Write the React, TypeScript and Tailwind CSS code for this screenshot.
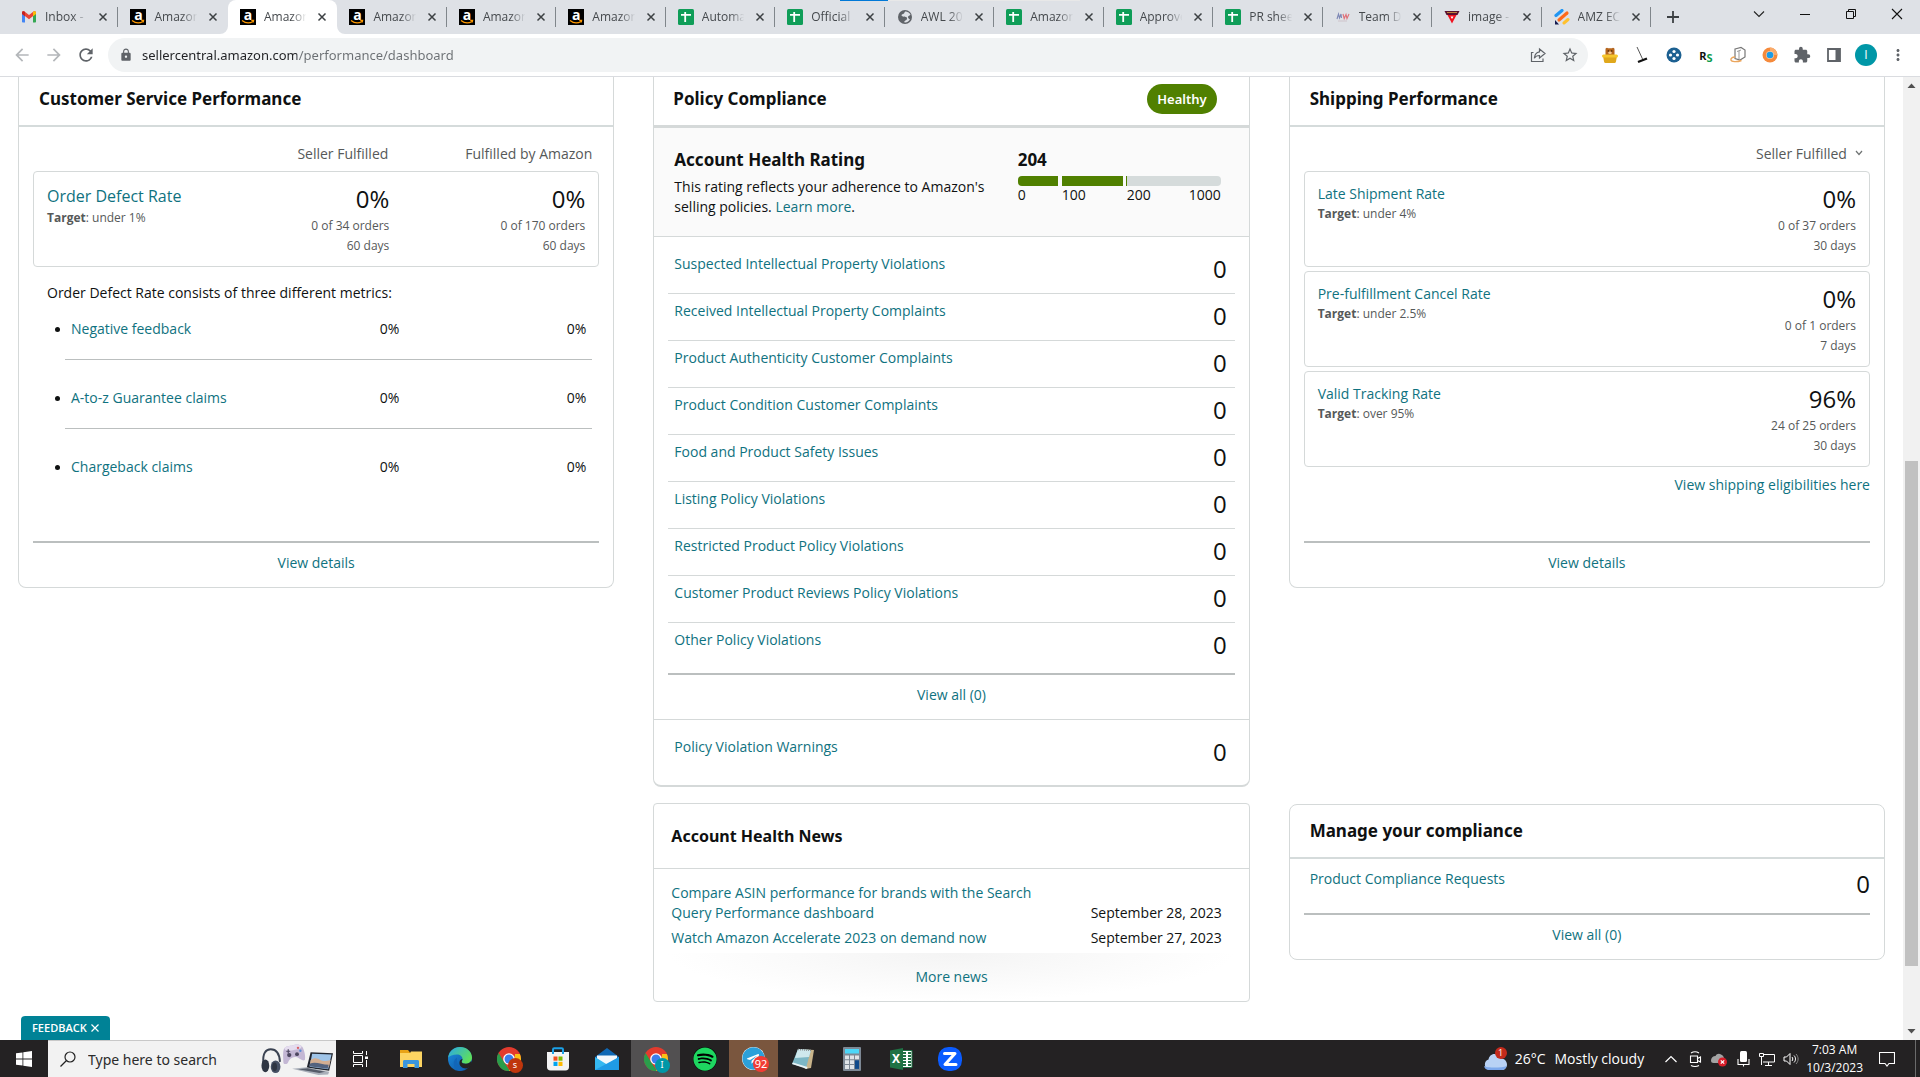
import type { ReactNode } from "react";
import { clsx } from "clsx";
import { FaSpotify, FaTelegram } from "react-icons/fa";
import {
  MdArrowBack,
  MdArrowForward,
  MdExtension,
  MdLock,
  MdMoreVert,
  MdRefresh,
  MdStarBorder,
} from "react-icons/md";

type TabIcon = "gmail" | "amazon" | "sheets" | "globe" | "team" | "image" | "amz";

const tabs: { title: string; icon: TabIcon; active?: boolean; sep?: boolean }[] = [
  { title: "Inbox - a", icon: "gmail", sep: true },
  { title: "Amazon", icon: "amazon" },
  { title: "Amazon", icon: "amazon", active: true },
  { title: "Amazon", icon: "amazon", sep: true },
  { title: "Amazon", icon: "amazon", sep: true },
  { title: "Amazon", icon: "amazon", sep: true },
  { title: "Automa", icon: "sheets", sep: true },
  { title: "Official S", icon: "sheets", sep: true },
  { title: "AWL 20", icon: "globe", sep: true },
  { title: "Amazon", icon: "sheets", sep: true },
  { title: "Approve", icon: "sheets", sep: true },
  { title: "PR shee", icon: "sheets", sep: true },
  { title: "Team D", icon: "team", sep: true },
  { title: "image -", icon: "image", sep: true },
  { title: "AMZ EC", icon: "amz", sep: true },
];

const defectMetrics = ["Negative feedback", "A-to-z Guarantee claims", "Chargeback claims"];

const shippingMetrics = [
  { title: "Late Shipment Rate", target: "under 4%", value: "0%", orders: "0 of 37 orders", days: "30 days" },
  { title: "Pre-fulfillment Cancel Rate", target: "under 2.5%", value: "0%", orders: "0 of 1 orders", days: "7 days" },
  { title: "Valid Tracking Rate", target: "over 95%", value: "96%", orders: "24 of 25 orders", days: "30 days" },
];

const policies = [
  "Suspected Intellectual Property Violations",
  "Received Intellectual Property Complaints",
  "Product Authenticity Customer Complaints",
  "Product Condition Customer Complaints",
  "Food and Product Safety Issues",
  "Listing Policy Violations",
  "Restricted Product Policy Violations",
  "Customer Product Reviews Policy Violations",
  "Other Policy Violations",
];

const news = [
  { title: "Compare ASIN performance for brands with the Search Query Performance dashboard", date: "September 28, 2023" },
  { title: "Watch Amazon Accelerate 2023 on demand now", date: "September 27, 2023" },
];

/* ---------- browser icons ---------- */

function Favicon({ icon }: { icon: TabIcon }) {
  switch (icon) {
    case "gmail":
      return (
        <svg viewBox="0 0 16 16" className="size-4 shrink-0">
          <path d="M1 3.5v9.2c0 .5.3.8.8.8H4V7z" fill="#4285f4" />
          <path d="M15 3.5v9.2c0 .5-.3.8-.8.8H12V7z" fill="#34a853" />
          <path d="M1 3.6C1 2.2 2.6 1.8 3.5 2.5L8 6l4.5-3.5c.9-.7 2.5-.3 2.5 1.1v1.2L8 10.2 1 4.8z" fill="#ea4335" />
          <path d="M12 3l.5-.5c1-.7 2.5-.3 2.5 1.1V5l-3 2.3z" fill="#fbbc04" />
          <path d="M1 3.6C1 2.5 2.2 2 3.2 2.4L4 3v4.2L1 5z" fill="#c5221f" />
        </svg>
      );
    case "amazon":
      return (
        <span className="relative flex size-4 shrink-0 justify-center bg-black">
          <span className="font-['Open_Sans',sans-serif] text-[14px] leading-[11px] font-bold text-white">a</span>
          <svg viewBox="0 0 16 16" className="absolute inset-0 size-4">
            <path d="M2 11.500c3.500 2.800 8 2.800 11 .9M11.300 11.300h2.300l-.4 2.100" fill="none" stroke="#f90" strokeWidth="1.200" />
          </svg>
        </span>
      );
    case "sheets":
      return (
        <svg viewBox="0 0 16 16" className="size-4 shrink-0">
          <rect width="16" height="16" rx="1.500" fill="#0f9d58" />
          <path d="M3 5.800h10M7.200 3v10" stroke="#fff" strokeWidth="1.800" />
        </svg>
      );
    case "globe":
      return (
        <svg viewBox="0 0 16 16" className="size-4 shrink-0">
          <circle cx="8" cy="8" r="7" fill="#5f6368" />
          <path d="M9 2.500c-2 0-1 2-3 2.500s-2 2 0 2.500 4 0 4 2-2 1.500-3 3.800c2.500.5 5-.5 6-3-1-.3-2-1-2-2.300s2-1 2.500-2.500C12.500 4 11 2.800 9 2.500z" fill="#dee1e6" />
        </svg>
      );
    case "team":
      return (
        <svg viewBox="0 0 16 16" className="size-4 shrink-0">
          <path d="M2 10l1.500-5 1 4 1.500-4 .5 4" fill="none" stroke="#7d87b5" strokeWidth="1.100" />
          <path d="M8 5l1.200 4.500L11 5.500l1 4L14 5" fill="none" stroke="#e07078" strokeWidth="1.100" />
          <path d="M3 12h9" stroke="#c9b7bd" strokeWidth=".7" />
        </svg>
      );
    case "image":
      return (
        <svg viewBox="0 0 16 16" className="size-4 shrink-0">
          <path d="M.5 2h15l-2 4h-11z" fill="#5b1230" />
          <path d="M3 3.500h10" stroke="#d9a441" strokeWidth=".8" />
          <path d="M3.500 6h9L8 14.500z" fill="#f0121f" />
          <path d="M6.500 7.500h3L8 10z" fill="#fff" />
        </svg>
      );
    case "amz":
      return (
        <svg viewBox="0 0 16 16" className="size-4 shrink-0">
          <path d="M2 6.500L8 1.500" stroke="#2196f3" strokeWidth="3.200" strokeLinecap="round" />
          <path d="M5 11l8-7" stroke="#ff6a1a" strokeWidth="3.200" strokeLinecap="round" />
          <path d="M10 14l4-3.500" stroke="#ffc12e" strokeWidth="3" strokeLinecap="round" />
          <path d="M1 11l4 4.500H1z" fill="#151a4f" />
        </svg>
      );
  }
}

function CloseIcon() {
  return (
    <svg viewBox="0 0 16 16" className="size-4">
      <path d="M4.500 4.500l7 7M11.500 4.500l-7 7" stroke="#3c4043" strokeWidth="1.500" />
    </svg>
  );
}

function Tab({ title, icon, active, sep }: (typeof tabs)[number]) {
  return (
    <div
      className={clsx(
        "relative flex h-full min-w-0 flex-1 basis-0 items-center pl-3",
        active && "rounded-t-lg bg-white"
      )}
    >
      {active && (
        <>
          <svg viewBox="0 0 8 8" className="absolute bottom-0 -left-2 size-2">
            <path d="M8 0v8H0a8 8 0 0 0 8-8z" fill="#fff" />
          </svg>
          <svg viewBox="0 0 8 8" className="absolute -right-2 bottom-0 size-2">
            <path d="M0 0v8h8a8 8 0 0 1-8-8z" fill="#fff" />
          </svg>
        </>
      )}
      <Favicon icon={icon} />
      <span className="ml-2 min-w-0 flex-1 overflow-hidden font-['Open_Sans',sans-serif] text-xs whitespace-nowrap text-[#45494d] [mask-image:linear-gradient(to_right,black_55%,transparent_85%)]">
        {title}
      </span>
      <button type="button" aria-label="Close tab" className="mr-[7px]">
        <CloseIcon />
      </button>
      {sep && <span className="absolute top-[7px] right-0 h-5 w-px bg-[#80868b]" />}
    </div>
  );
}

function TabStrip() {
  return (
    <div className="relative flex h-[34px] shrink-0 bg-[#dee1e6]">
      {/* page sharing indicator */}
      <div className="absolute top-0 left-[840px] flex h-px">
        <span className="w-12 bg-[#0078d7]" />
        <span className="w-48 bg-[#e8e8e8]" />
      </div>
      <div className="flex min-w-0 flex-1 pl-[9px]">
        {tabs.map((tab, i) => (
          <Tab key={i} {...tab} />
        ))}
      </div>
      <div className="flex w-[269px] shrink-0 items-center">
        <button type="button" aria-label="New tab" className="ml-[14px]">
          <svg viewBox="0 0 16 16" className="size-4">
            <path d="M8 2v12M2 8h12" stroke="#3c4043" strokeWidth="1.800" />
          </svg>
        </button>
        <div className="mb-[6px] ml-auto flex items-center gap-[30px] pr-[15px]">
          <button type="button" aria-label="Search tabs">
            <svg viewBox="0 0 16 16" className="size-4">
              <path d="M3 5.500l5 5 5-5" fill="none" stroke="#222" strokeWidth="1.100" />
            </svg>
          </button>
          <button type="button" aria-label="Minimize">
            <svg viewBox="0 0 16 16" className="size-4">
              <path d="M3 8.500h10" stroke="#111" />
            </svg>
          </button>
          <button type="button" aria-label="Restore">
            <svg viewBox="0 0 16 16" className="size-4">
              <path d="M3.500 5.500h7v7h-7zM5.500 5.500v-2h7v7h-2" fill="none" stroke="#111" />
            </svg>
          </button>
          <button type="button" aria-label="Close window">
            <svg viewBox="0 0 16 16" className="size-4">
              <path d="M3 3l10 10M13 3L3 13" stroke="#111" strokeWidth="1.100" />
            </svg>
          </button>
        </div>
      </div>
    </div>
  );
}

const extensions: { label: string; icon: ReactNode }[] = [
  {
    label: "Honeypot extension",
    icon: (
      <svg viewBox="0 0 18 18" className="size-[18px]">
        <path d="M4.500 3.500a1.500 1.500 0 0 1 2.500-1.300h4a1.500 1.500 0 0 1 2.500 1.300V9h-9z" fill="#b5651d" />
        <circle cx="7.300" cy="5" r=".8" fill="#3b1d06" />
        <circle cx="10.700" cy="5" r=".8" fill="#3b1d06" />
        <ellipse cx="9" cy="6.800" rx="1.800" ry="1.200" fill="#f3c892" />
        <path d="M2 10h14l-1 5.500c-.2 1-1 1.500-2 1.500H5c-1 0-1.800-.5-2-1.500z" fill="#e0a81c" />
        <rect x="1" y="8.500" width="16" height="3" rx="1.500" fill="#f6c62d" />
      </svg>
    ),
  },
  {
    label: "Broom extension",
    icon: (
      <svg viewBox="0 0 18 18" className="size-[18px]">
        <path d="M4 1l6 13" stroke="#555" strokeWidth="1" />
        <path d="M5 16l9-3.500" stroke="#111" strokeWidth="2.400" />
      </svg>
    ),
  },
  {
    label: "Helium extension",
    icon: (
      <svg viewBox="0 0 18 18" className="size-[18px]">
        <circle cx="9" cy="9" r="7.500" fill="#1c6091" />
        <g fill="#fff">
          <circle cx="9" cy="5.500" r="1.600" />
          <circle cx="9" cy="12.500" r="1.600" />
          <circle cx="5.500" cy="9" r="1.600" />
          <circle cx="12.500" cy="9" r="1.600" />
        </g>
      </svg>
    ),
  },
  {
    label: "RevSeller",
    icon: (
      <span className="flex size-[18px] items-center justify-center text-[11px] leading-none font-bold">
        <span className="text-[#111]">R</span>
        <span className="pt-1 text-[#0c9a4b]">S</span>
      </span>
    ),
  },
  {
    label: "Box extension",
    icon: (
      <svg viewBox="0 0 18 18" className="size-[18px]">
        <path d="M6 3l6-1.500L16 4v7l-5 3-5-1.500z" fill="#fff" stroke="#777" strokeWidth="1.200" />
        <path d="M10 5v8M8 5.500L12 4" stroke="#999" />
        <path d="M6 11c-3 0-4.500 1.800-4 3.200s5 2.300 10.500.3" fill="none" stroke="#eba55c" strokeWidth="1.400" />
      </svg>
    ),
  },
  {
    label: "Seller toolkit",
    icon: (
      <svg viewBox="0 0 18 18" className="size-[18px]">
        <circle cx="9" cy="9" r="7.500" fill="#f58a3c" />
        <path d="M9 1.500A7.500 7.500 0 0 1 16.500 9H9z" fill="#f9ab6b" />
        <circle cx="9" cy="9" r="4" fill="#f9c9a0" />
        <circle cx="9" cy="9" r="3.300" fill="#1c9be6" />
      </svg>
    ),
  },
  { label: "Extensions", icon: <MdExtension className="size-[18px] text-[#5f6368]" /> },
  {
    label: "Side panel",
    icon: (
      <svg viewBox="0 0 18 18" className="size-[18px]">
        <path d="M3 3h12v12H3z" fill="none" stroke="#5f6368" strokeWidth="1.800" />
        <path d="M10.500 3H15v12h-4.500z" fill="#5f6368" />
      </svg>
    ),
  },
];

function Toolbar() {
  return (
    <div className="flex h-[43px] shrink-0 items-center border-b border-[#dadce0] bg-white pr-[13px] pl-3">
      <div className="flex w-24 items-center gap-3">
        <button type="button" aria-label="Back">
          <MdArrowBack className="size-5 text-[#b4b7ba]" />
        </button>
        <button type="button" aria-label="Forward">
          <MdArrowForward className="size-5 text-[#b4b7ba]" />
        </button>
        <button type="button" aria-label="Reload">
          <MdRefresh className="size-5 text-[#5f6368]" />
        </button>
      </div>
      <div className="flex h-[34px] flex-1 items-center rounded-full bg-[#f1f3f4] pr-[9px] pl-[11px]">
        <MdLock className="size-[14px] text-[#5f6368]" />
        {/* the host part of the address is darker than the path */}
        <input
          aria-label="Address"
          readOnly
          value="sellercentral.amazon.com/performance/dashboard"
          className="ml-[9px] flex-1 bg-linear-to-r from-[#202124] from-[155px] to-[#6b6f73] to-[155px] bg-clip-text pt-px text-[13px] text-transparent outline-none"
        />
        <div className="flex items-center gap-[14px]">
          <button type="button" aria-label="Share this page">
            <svg viewBox="0 0 18 18" className="size-[18px]">
              <path
                d="M4.500 6.500H2.500v9h11.500v-3M10.500 3l5.500 4.500-5.500 4.500V9.500c-2.500 0-4 .8-5.200 2.700.3-3.200 2-5.900 5.200-6.400z"
                fill="none"
                stroke="#5f6368"
                strokeWidth="1.200"
              />
            </svg>
          </button>
          <button type="button" aria-label="Bookmark this tab">
            <MdStarBorder className="size-[18px] text-[#5f6368]" />
          </button>
        </div>
      </div>
      <div className="ml-[13px] flex items-center gap-[14px]">
        {extensions.map((ext) => (
          <button key={ext.label} type="button" aria-label={ext.label}>
            {ext.icon}
          </button>
        ))}
      </div>
      <button
        type="button"
        className="ml-3 flex size-[22px] items-center justify-center rounded-full bg-[#0097a7] font-['Open_Sans',sans-serif] text-xs text-white"
      >
        I
      </button>
      <button type="button" aria-label="Chrome menu" className="ml-3">
        <MdMoreVert className="size-[18px] text-[#5f6368]" />
      </button>
    </div>
  );
}

/* ---------- dashboard ---------- */

function TextLink({ children, className }: { children: ReactNode; className?: string }) {
  return (
    <a href="#" className={clsx("text-[#0f7280]", className)}>
      {children}
    </a>
  );
}

function CardHeading({ children }: { children: ReactNode }) {
  return <h2 className="font-['Noto_Sans',sans-serif] text-[17px] leading-6 font-bold">{children}</h2>;
}

function CardFooter({ children }: { children: ReactNode }) {
  return (
    <div className="border-t-2 border-[#bbbfbf] pt-[10px] pb-[14px] text-center">
      <TextLink>{children}</TextLink>
    </div>
  );
}

function Rate({ value, orders, days }: { value: string; orders: string; days: string }) {
  return (
    <div className="text-right text-xs leading-5 text-[#565959]">
      <p className="mb-[2px] text-2xl leading-[30px] text-[#0f1111]">{value}</p>
      <p>{orders}</p>
      <p>{days}</p>
    </div>
  );
}

function Target({ children }: { children: ReactNode }) {
  return (
    <p className="text-xs leading-5 text-[#565959]">
      <b>Target</b>: {children}
    </p>
  );
}

function CountRow({ title, className }: { title: string; className?: string }) {
  return (
    <div className={clsx("flex justify-between pt-[7px] pb-[9px] pl-[6px]", className)}>
      <TextLink>{title}</TextLink>
      <span className="text-2xl leading-[30px]">0</span>
    </div>
  );
}

function CustomerService() {
  return (
    <section className="rounded-b-lg border border-t-0 border-[#d5d9d9]">
      <div className="flex h-12 items-center pb-1 pl-5">
        <CardHeading>Customer Service Performance</CardHeading>
      </div>
      <div className="border-t-2 border-[#d5dbdb] px-[14px] pt-[17px]">
        <div className="flex justify-end pr-[7px] text-right text-[#565959]">
          <span>Seller Fulfilled</span>
          <span className="w-[204px]">Fulfilled by Amazon</span>
        </div>
        <div className="mt-[7px] flex rounded border border-[#d5d9d9] px-[13px] pt-3 pb-[10px]">
          <div className="flex-1">
            <TextLink className="block text-base leading-6">Order Defect Rate</TextLink>
            <Target>under 1%</Target>
          </div>
          <Rate value="0%" orders="0 of 34 orders" days="60 days" />
          <div className="w-[196px]">
            <Rate value="0%" orders="0 of 170 orders" days="60 days" />
          </div>
        </div>
        <p className="mt-4 pl-[14px]">Order Defect Rate consists of three different metrics:</p>
        <ul className="mt-4 mb-16 pr-[7px] pl-[22px]">
          {defectMetrics.map((metric, i) => (
            <li key={metric} className="flex">
              <span className={clsx("w-[10px]", i > 0 && "pt-7")}>
                <span className="mt-2 block size-[5px] rounded-full bg-[#0f1111]" />
              </span>
              <div
                className={clsx(
                  "flex flex-1 pr-[6px] pl-[6px] text-right",
                  i > 0 && "pt-7",
                  i < 2 && "border-b border-[#bbbfbf] pb-5"
                )}
              >
                <TextLink className="flex-1 text-left">{metric}</TextLink>
                <span>0%</span>
                <span className="w-[187px]">0%</span>
              </div>
            </li>
          ))}
        </ul>
        <CardFooter>View details</CardFooter>
      </div>
    </section>
  );
}

function PolicyCompliance() {
  return (
    <section className="rounded-b-lg border border-t-0 border-b-2 border-[#d5d9d9]">
      <div className="flex h-12 items-center justify-between pr-8 pb-1 pl-[19px]">
        <CardHeading>Policy Compliance</CardHeading>
        <span className="rounded-2xl bg-[#508000] px-[10px] py-[5px] font-['Noto_Sans',sans-serif] text-[13px] font-semibold text-white">
          Healthy
        </span>
      </div>
      <div className="flex justify-between border-t-3 border-b border-[#d5d9d9] bg-[#fafafa] pt-5 pr-7 pb-[19px] pl-5">
        <div className="w-[316px]">
          <CardHeading>Account Health Rating</CardHeading>
          <p className="mt-[5px]">
            This rating reflects your adherence to Amazon's selling policies. <TextLink>Learn more</TextLink>.
          </p>
        </div>
        <div className="w-[203px]">
          <p className="font-['Noto_Sans',sans-serif] text-[17px] leading-6 font-bold">204</p>
          <div className="mt-1 flex h-[10px] overflow-hidden rounded">
            <span className="w-10 bg-[#508000]" />
            <span className="ml-1 w-[61px] bg-[#508000]" />
            <span className="ml-[3px] w-px bg-[#508000]" />
            <span className="flex-1 bg-[#d5dbdb]" />
          </div>
          <div className="flex leading-[18px]">
            <span className="w-11">0</span>
            <span className="w-[65px]">100</span>
            <span>200</span>
            <span className="ml-auto">1000</span>
          </div>
        </div>
      </div>
      <div className="px-[14px] pt-[10px]">
        {policies.map((title, i) => (
          <CountRow
            key={title}
            title={title}
            className={clsx("pr-2", i < policies.length - 1 ? "border-b border-[#d5d9d9]" : "mb-1")}
          />
        ))}
        <CardFooter>View all (0)</CardFooter>
      </div>
      <div className="border-t border-[#d5d9d9] px-[14px] pt-[10px] pb-[9px]">
        <CountRow title="Policy Violation Warnings" className="pr-2" />
      </div>
    </section>
  );
}

function Shipping() {
  return (
    <section className="rounded-b-lg border border-t-0 border-[#d5d9d9]">
      <div className="flex h-12 items-center pb-1 pl-5">
        <CardHeading>Shipping Performance</CardHeading>
      </div>
      <div className="border-t-2 border-[#d5dbdb] px-[14px] pt-[17px]">
        <div className="relative flex h-5 justify-end pr-[4px]">
          <select
            aria-label="Fulfillment channel"
            className="appearance-none bg-transparent pr-[19px] leading-5 text-[#565959] outline-none"
          >
            <option>Seller Fulfilled</option>
          </select>
          <svg viewBox="0 0 14 14" className="pointer-events-none absolute top-[2px] right-[4px] size-[14px]">
            <path d="M4 5l3 3.500L10 5" fill="none" stroke="#6f7373" strokeWidth="1.200" />
          </svg>
        </div>
        <div className="mt-[7px] flex flex-col gap-1">
          {shippingMetrics.map((m) => (
            <div key={m.title} className="flex justify-between rounded border border-[#d5d9d9] px-[13px] pt-3 pb-[10px]">
              <div>
                <TextLink className="block">{m.title}</TextLink>
                <Target>{m.target}</Target>
              </div>
              <Rate value={m.value} orders={m.orders} days={m.days} />
            </div>
          ))}
        </div>
        <p className="mt-2 mb-[46px] text-right">
          <TextLink>View shipping eligibilities here</TextLink>
        </p>
        <CardFooter>View details</CardFooter>
      </div>
    </section>
  );
}

function News() {
  return (
    <section className="col-start-2 rounded border border-[#d5d9d9]">
      <div className="flex h-16 items-center pl-[17px]">
        <h2 className="font-['Noto_Sans',sans-serif] text-base leading-6 font-bold">Account Health News</h2>
      </div>
      <div className="border-t border-[#d5d9d9] pt-[14px]">
        <ul className="flex flex-col gap-[5px] pr-[27px] pb-[5px] pl-[17px]">
          {news.map((item) => (
            <li key={item.date} className="flex items-end justify-between">
              <TextLink className="block max-w-[364px]">{item.title}</TextLink>
              <span>{item.date}</span>
            </li>
          ))}
        </ul>
        <div className="mx-[14px] bg-[radial-gradient(ellipse_50%_100%_at_top,#f4f4f4,#fff)] pt-[14px] pb-[14px] text-center">
          <TextLink>More news</TextLink>
        </div>
      </div>
    </section>
  );
}

function Compliance() {
  return (
    <section className="mt-px rounded-lg border border-[#d5d9d9]">
      <div className="flex h-[52px] items-center pl-5">
        <CardHeading>Manage your compliance</CardHeading>
      </div>
      <div className="border-t-2 border-[#d5dbdb] px-[14px] pt-[3px]">
        <CountRow title="Product Compliance Requests" className="mb-[5px]" />
        <CardFooter>View all (0)</CardFooter>
      </div>
    </section>
  );
}

function Scrollbar() {
  return (
    <div className="flex w-[17px] shrink-0 flex-col items-center bg-[#f1f1f1]">
      <svg viewBox="0 0 17 17" className="size-[17px]">
        <path d="M8.500 6.500l4 4.500h-8z" fill="#505050" />
      </svg>
      <div className="flex-367" />
      <div className="w-[13px] flex-505 bg-[#c1c1c1]" />
      <div className="flex-57" />
      <svg viewBox="0 0 17 17" className="size-[17px]">
        <path d="M8.500 10.500l4-4.500h-8z" fill="#505050" />
      </svg>
    </div>
  );
}

/* ---------- taskbar ---------- */

function ChromeLogo({ badge, color }: { badge: string; color: string }) {
  return (
    <span className="relative">
      <svg viewBox="0 0 24 24" className="size-6">
        <circle cx="12" cy="12" r="12" fill="#e33b2e" />
        <path d="M1.600 6L8 16.500 13 24A12 12 0 0 1 1.600 6z" fill="#2a9d4b" />
        <path d="M12 24l5.500-9L18 7h4.900A12 12 0 0 1 12 24z" fill="#fbc116" />
        <circle cx="12" cy="12" r="5.800" fill="#fff" />
        <circle cx="12" cy="12" r="4.500" fill="#3b7ded" />
      </svg>
      <span
        className={clsx(
          "absolute -right-[2px] -bottom-[2px] flex size-[15px] items-center justify-center rounded-full text-[9px] text-white",
          color
        )}
      >
        {badge}
      </span>
    </span>
  );
}

const apps: { name: string; className?: string; icon: ReactNode }[] = [
  {
    name: "File Explorer",
    icon: (
      <svg viewBox="0 0 24 24" className="size-6">
        <path d="M1 3h8l2 2.500V8H1z" fill="#e8a317" />
        <path d="M1 6h10l1-1.500h11V20H1z" fill="#fcd462" />
        <path d="M4 21v-6.500c0-.8.500-1.500 1.500-1.500h13c1 0 1.500.7 1.500 1.500V21h-4.500v-4h-7v4z" fill="#3a96dd" />
      </svg>
    ),
  },
  {
    name: "Microsoft Edge",
    icon: (
      <svg viewBox="0 0 24 24" className="size-6">
        <defs>
          <linearGradient id="edgeTop" x1="0" y1="0" x2="1" y2="0.6">
            <stop offset="0" stopColor="#2aa8e8" />
            <stop offset="1" stopColor="#5fe05a" />
          </linearGradient>
          <linearGradient id="edgeLow" x1="0" y1="0" x2="1" y2="1">
            <stop offset="0" stopColor="#1c8fe0" />
            <stop offset="1" stopColor="#0c4f9e" />
          </linearGradient>
        </defs>
        <circle cx="12" cy="12" r="12" fill="url(#edgeLow)" />
        <path d="M.2 10.500C1 4.500 5.800 0 12 0c7 0 12 5 12 10.500 0 4-3 6.300-6.300 6.300-2.500 0-4-.9-4-2 0-.8.800-1.200.8-2.800C14.500 9.500 12 7.500 9 7.500c-4.500 0-7.500 1.500-8.800 3z" fill="url(#edgeTop)" />
        <path d="M14.500 12c-.3 1.500-.8 2-.8 2.800 0 1.100 1.500 2 4 2 2.300 0 4.300-1 5.400-2.800l.9 2-2 4c-1.500 1-3.300 1.600-5 1.400-3.500-.4-6-3-5.500-6.400.3-1.700 1.500-2.800 3-3z" fill="#242223" />
        <path d="M9 14c0 5 4 8 9 7.600-3.500 2.500-6 2.400-7.500 2.200C6.500 22 5 18 6 14.500 6.800 12 9 10.500 9 10.500z" fill="#1266b8" />
      </svg>
    ),
  },
  { name: "Chrome S", icon: <ChromeLogo badge="s" color="bg-[#bf360c]" /> },
  {
    name: "Microsoft Store",
    icon: (
      <svg viewBox="0 0 24 24" className="size-6">
        <path d="M1 5h22v15c0 2-1.200 3.500-3.500 3.500h-15C2.200 23.500 1 22 1 20z" fill="#f3f3f3" />
        <path d="M7 7V2.500c0-.8.500-1.300 1.300-1.300h7.400c.8 0 1.300.5 1.300 1.300V7" fill="none" stroke="#1ba1e8" strokeWidth="2" />
        <path d="M7.500 9.500h4v4.200h-4z" fill="#f25022" />
        <path d="M12.500 9.500h4v4.200h-4z" fill="#7fba00" />
        <path d="M7.500 14.800h4V19h-4z" fill="#00a4ef" />
        <path d="M12.500 14.800h4V19h-4z" fill="#ffb900" />
      </svg>
    ),
  },
  {
    name: "Mail",
    icon: (
      <svg viewBox="0 0 24 24" className="size-6">
        <path d="M12 1l12 9v13H0V10z" fill="#0f68b4" />
        <path d="M2 8.500h20V18H2z" fill="#f4f8fb" />
        <path d="M0 10l12 7.500L24 10v13H0z" fill="#35b8f1" />
        <path d="M24 10v13H0z" fill="#1f9be6" />
      </svg>
    ),
  },
  { name: "Chrome I", className: "bg-[#525051]", icon: <ChromeLogo badge="I" color="bg-[#0097a7]" /> },
  {
    name: "Spotify",
    icon: (
      <span className="rounded-full bg-black">
        <FaSpotify className="size-6 text-[#1ed760]" />
      </span>
    ),
  },
  {
    name: "Telegram",
    className: "bg-[#7a563e]",
    icon: (
      <span className="relative rounded-full bg-white">
        <FaTelegram className="size-[23px] text-[#2ba0da]" />
        <span className="absolute -right-1 -bottom-[2px] flex size-4 items-center justify-center rounded-full bg-[#f23c34] text-[11px] text-white">
          92
        </span>
      </span>
    ),
  },
  {
    name: "Notepad",
    icon: (
      <svg viewBox="0 0 24 24" className="size-6">
        <path d="M8 2l15 1-3 18-6 1z" fill="#c9b48a" />
        <path d="M7 2l13 1-5 18L1 17z" fill="#7db7c5" />
        <path d="M7 2l13 1-2 7L4 11z" fill="#cfe8ed" />
        <path d="M1 17l15 5 .5-2L2 15.500z" fill="#e8f2f4" />
        <path d="M7 2.500l14 1" stroke="#8a8f91" strokeWidth="1.500" strokeDasharray="1 1" />
      </svg>
    ),
  },
  {
    name: "Calculator",
    icon: (
      <svg viewBox="0 0 24 24" className="size-6">
        <rect x="3" width="18" height="24" rx="1" fill="#7d8894" />
        <path d="M5 2h14v4.500H5z" fill="#4cd7f8" />
        <path d="M5 8.500h4v3.800H5zM10 8.500h4v3.800h-4zM15 8.500h4v3.800h-4zM5 13.300h4v3.800H5zM10 13.300h4v3.800h-4zM5 18.100h4v3.800H5zM10 18.100h4v3.800h-4z" fill="#dfe4e8" />
        <path d="M15 13.300h4v8.600h-4z" fill="#0f4a8a" />
      </svg>
    ),
  },
  {
    name: "Excel",
    icon: (
      <span className="relative flex">
        <svg viewBox="0 0 24 24" className="size-6">
          <path d="M12 3.500h11v17H12z" fill="#fff" stroke="#1f7244" />
          <path d="M14 6h3M19 6h3M14 9h3M19 9h3M14 12h3M19 12h3M14 15h3M19 15h3M14 18h3M19 18h3" stroke="#1f7244" strokeWidth="1.800" />
          <path d="M1 3.500L14 1v22L1 20.500z" fill="#1f7244" />
        </svg>
        <span className="absolute top-0 left-0 w-[15px] text-center text-xs leading-6 font-bold text-white">X</span>
      </span>
    ),
  },
  {
    name: "Zoom",
    icon: (
      <svg viewBox="0 0 24 24" className="size-6">
        <rect width="24" height="24" rx="10.500" fill="#0b5cff" />
        <path d="M6.500 6.500h10.500L7 17.500h11" fill="none" stroke="#fff" strokeWidth="3" strokeLinejoin="round" strokeLinecap="round" />
      </svg>
    ),
  },
];

function SearchArt() {
  return (
    <svg viewBox="0 0 76 36" className="h-9 w-[74px]">
      {/* headset */}
      <path d="M3.500 22C2.500 12 6 8 11 8s9 4 9.500 13" fill="none" stroke="#3b4352" strokeWidth="2" />
      <ellipse cx="5.500" cy="25" rx="4" ry="6.500" fill="#2f3643" />
      <ellipse cx="16" cy="26" rx="5" ry="6.500" fill="#465064" />
      <ellipse cx="15" cy="26" rx="2.500" ry="4.500" fill="#2f3643" />
      {/* gamepad */}
      <path d="M25 7c3-3 7-2 9-3s6-2 9 1c3 4 4 12 3 14-3 2-6-3-9-3s-6 1-8 5c-1 3-5 3-5 0 0-4-1-11 1-14z" fill="#c3b7d4" />
      <path d="M25 7c3-3 7-2 9-3s6-2 9 1c-1 3-4 3-9 4s-8 1-9-2z" fill="#e4dcee" />
      <circle cx="30" cy="14" r="2.200" fill="#4d4760" />
      <path d="M29 8v4M27 10h4" stroke="#4d4760" strokeWidth="1.200" />
      <circle cx="38" cy="13" r="2" fill="#4d4760" />
      <circle cx="39" cy="6.500" r="1.200" fill="#d95e64" />
      <circle cx="41.500" cy="9.500" r="1.200" fill="#5b8bd4" />
      {/* laptop */}
      <path d="M52 11l23 1-4 18-23-3z" fill="#20242d" />
      <path d="M53.500 12.500l20 1-3.500 15-19-2.500z" fill="#9fc4e8" />
      <path d="M52 19c4-3 7-2 10 0s7 1 10.500 0l-1.500 7-20-1z" fill="#d3ae92" />
      <path d="M51 23c6-3 12 1 19.500 1l-1 4-19-2.500z" fill="#53627e" />
      <path d="M33 28l15-1.500L71 31l-1 3-10 .5z" fill="#a9afb9" />
      <path d="M39 28.500l10-1 18 3.500-6 1.500z" fill="#545b68" />
    </svg>
  );
}

function Taskbar() {
  return (
    <footer className="flex h-[37px] shrink-0 items-stretch bg-[#242223] text-white">
      <button type="button" aria-label="Start" className="flex w-12 items-center justify-center">
        <svg viewBox="0 0 16 16" className="size-4">
          <path d="M0 2.300L6.500 1.400v6.200H0zM7.300 1.300L16 0v7.600H7.300zM0 8.400h6.500v6.200L0 13.700zM7.300 8.400H16V16l-8.700-1.200z" fill="#fff" />
        </svg>
      </button>
      <div className="flex w-[288px] items-center border-t border-[#c8c8c8] bg-[#f2f2f2] pr-[2px] pl-3">
        <svg viewBox="0 0 16 16" className="size-4 shrink-0">
          <circle cx="10" cy="6" r="5" fill="none" stroke="#222" strokeWidth="1.200" />
          <path d="M6.500 9.500L.5 15.500" stroke="#222" strokeWidth="1.200" />
        </svg>
        <input
          aria-label="Type here to search"
          placeholder="Type here to search"
          className="ml-3 min-w-0 flex-1 bg-transparent pt-px text-[14px] outline-none placeholder:text-[#2b2b2b]"
        />
        <SearchArt />
      </div>
      <button type="button" aria-label="Task view" className="flex w-[50px] items-center pl-[15px]">
        <svg viewBox="0 0 18 18" className="size-[18px]">
          <path d="M2.500 5.500h9v7h-9zM2.500 1v2.500h9V1M2.500 17v-2.500h9V17M15.500 1v4M15.500 10v7" fill="none" stroke="#fff" />
          <path d="M14 6.500h3v2.500h-3z" fill="#fff" />
        </svg>
      </button>
      {apps.map((app) => (
        <button
          key={app.name}
          type="button"
          aria-label={app.name}
          className={clsx("flex w-[49px] items-center justify-center", app.className)}
        >
          {app.icon}
        </button>
      ))}
      <div className="ml-auto flex items-center font-['Open_Sans',sans-serif]">
        <button type="button" className="mr-[19px] flex items-center pt-px text-sm">
          <span className="relative mr-2">
            <svg viewBox="0 0 24 24" className="size-6">
              <path d="M6 23a5.500 5.500 0 0 1-.5-10.500C6 9 9 6.500 12 7c3 0 4.500 2 5.500 4.500C21 11 24 14 24 17.500S21.500 23 19 23z" fill="#b9d2f5" />
              <path d="M1 19c3 2 18 2 22.500 0-.5 2.500-2.500 4-4.500 4H6c-2.500 0-4.500-1.500-5-4z" fill="#7ea9ec" />
            </svg>
            <span className="absolute top-0 right-0 flex size-3 items-center justify-center rounded-full bg-[#c42b1c] text-[9px]">
              1
            </span>
          </span>
          26°C
          <span className="ml-[9px]">Mostly cloudy</span>
        </button>
        <div className="flex items-center gap-2">
          <svg viewBox="0 0 16 16" className="size-4">
            <path d="M2.500 11L8 5.500 13.500 11" fill="none" stroke="#fff" strokeWidth="1.200" />
          </svg>
          <svg viewBox="0 0 16 16" className="size-4">
            <path d="M3.500 5h7v6.500h-7zM10.500 7.500l3-1.500v5l-3-1.500M4 2c2.500-1.500 5.500-1.500 8 0M4 14.500c2.500 1.200 5.500 1.200 8 0" fill="none" stroke="#fff" strokeWidth="1.100" />
          </svg>
          <svg viewBox="0 0 16 16" className="size-4">
            <path d="M0 9.500C0 7 2 5 4.500 5 5.500 3 8 2 10 3.500c2 .5 3 2.500 3 4.500v4H2.500A2.500 2.500 0 0 1 0 9.500z" fill="#a3a3a3" />
            <circle cx="11.500" cy="11" r="4.500" fill="#d91e2a" />
            <path d="M9.800 9.300l3.400 3.400M13.200 9.300l-3.400 3.400" stroke="#fff" strokeWidth="1.200" />
          </svg>
          <svg viewBox="0 0 16 16" className="size-4">
            <rect x="5" width="7" height="11" rx="1.500" fill="#fff" />
            <path d="M3 8v5.500h11V8M8.500 13.500v2" fill="none" stroke="#fff" strokeWidth="1.100" />
          </svg>
          <svg viewBox="0 0 16 16" className="size-4">
            <path d="M4 3.500h11.500v7.500H4M9.500 11v3M6 14.500h7M.5 2.500h4v3h-4zM2.500 5.500V14" fill="none" stroke="#fff" />
          </svg>
          <svg viewBox="0 0 16 16" className="size-4">
            <path d="M1 6h2.500L7 2.500v11L3.500 10H1z" fill="none" stroke="#fff" />
            <path d="M9 6c1 1.200 1 2.800 0 4M11 4.500c2 2 2 5 0 7" fill="none" stroke="#fff" />
            <path d="M13 3c2.800 3 2.800 7 0 10" fill="none" stroke="#888" />
          </svg>
        </div>
        <div className="mr-4 ml-[7px] pt-px text-center text-xs leading-[18px]">
          <p>7:03 AM</p>
          <p>10/3/2023</p>
        </div>
        <button type="button" aria-label="Notifications" className="mr-5">
          <svg viewBox="0 0 16 16" className="size-4">
            <path d="M.5 1.500h15v11H10L8 15l-2-2.500H.5z" fill="none" stroke="#fff" strokeWidth="1.100" />
          </svg>
        </button>
        <span className="mr-1 h-[37px] w-px bg-[#6b6b6b]" />
      </div>
    </footer>
  );
}

export default function App() {
  return (
    <div className="flex h-screen flex-col overflow-hidden bg-white font-['Noto_Sans','Open_Sans',sans-serif]">
      <TabStrip />
      <Toolbar />
      <div className="relative flex min-h-0 flex-1">
        <main className="grid min-w-0 flex-1 auto-rows-max grid-cols-3 items-start gap-x-[39px] gap-y-4 overflow-hidden px-[18px] font-['Open_Sans','Noto_Sans',sans-serif] text-sm leading-5 text-[#0f1111]">
          <CustomerService />
          <PolicyCompliance />
          <Shipping />
          <News />
          <Compliance />
        </main>
        <Scrollbar />
        <button
          type="button"
          className="absolute bottom-0 left-[21px] flex h-6 items-center gap-1 rounded-t bg-[#008296] px-[11px] font-['Open_Sans',sans-serif] text-[11px] font-semibold text-white"
        >
          FEEDBACK
          <svg viewBox="0 0 8 8" className="size-2">
            <path d="M.5.5l7 7M7.500.5l-7 7" stroke="#fff" strokeWidth="1.200" />
          </svg>
        </button>
      </div>
      <Taskbar />
    </div>
  );
}
